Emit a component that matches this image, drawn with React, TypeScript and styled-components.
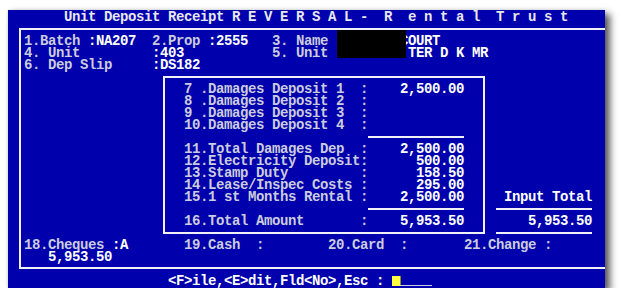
import styled, { createGlobalStyle } from 'styled-components';

const LABEL = '#ccccdf';
const BRIGHT = '#ffffff';
const LINE = '#f0f0f8';

const GlobalStyle = createGlobalStyle`
  html, body {
    margin: 0;
    padding: 0;
    background: #ffffff;
  }
`;

type Seg = [string, 'l' | 'v'];
type BoxItem = { label: string; amount?: string } | 'rule';

const header: Seg[][][] = [
  [
    [['1.Batch ', 'l'], [':NA207', 'v']],
    [['2.Prop ', 'l'], [':2555', 'v']],
    [['3. Name ', 'l'], [':       COURT', 'v']],
  ],
  [
    [['4. Unit', 'l']],
    [[':403', 'v']],
    [['5. Unit ', 'l'], [':        TER D K MR', 'v']],
  ],
  [[['6. Dep Slip', 'l']], [[':DS182', 'v']], []],
];

const boxItems: BoxItem[] = [
  { label: '7 .Damages Deposit 1', amount: '2,500.00' },
  { label: '8 .Damages Deposit 2' },
  { label: '9 .Damages Deposit 3' },
  { label: '10.Damages Deposit 4' },
  'rule',
  { label: '11.Total Damages Dep', amount: '2,500.00' },
  { label: '12.Electricity Deposit', amount: '500.00' },
  { label: '13.Stamp Duty', amount: '158.50' },
  { label: '14.Lease/Inspec Costs', amount: '295.00' },
  { label: '15.1 st Months Rental', amount: '2,500.00' },
  'rule',
  { label: '16.Total Amount', amount: '5,953.50' },
];

const renderSegs = (segs: Seg[]) =>
  segs.map(([text, kind], i) =>
    kind === 'l' ? <Lbl key={i}>{text}</Lbl> : <Val key={i}>{text}</Val>
  );

const App: React.FC = () => {
  return (
    <>
      <GlobalStyle />
      <Screen>
        <Title>Unit Deposit Receipt R E V E R S A L -  R  e n t a l  T r u s t</Title>
        <Frame>
          <HeaderGrid>
            {header.map((row, r) =>
              row.map((cell, c) => <Cell key={`${r}-${c}`}>{renderSegs(cell)}</Cell>)
            )}
          </HeaderGrid>
          <Redaction />
          <Middle>
            <Box>
              {boxItems.map((item, i) =>
                item === 'rule' ? (
                  <BoxRow key={i}>
                    <span />
                    <span />
                    <Rule />
                  </BoxRow>
                ) : (
                  <BoxRow key={i}>
                    <Lbl>{item.label}</Lbl>
                    <Lbl>:</Lbl>
                    <Amount>{item.amount ?? ''}</Amount>
                  </BoxRow>
                )
              )}
            </Box>
            <Side>
              <Amount as="div">Input Total</Amount>
              <Rule />
              <Amount as="div">5,953.50</Amount>
              <Rule />
            </Side>
          </Middle>
          <PayGrid>
            <Cell>
              <Lbl>18.Cheques </Lbl>
              <Val>:A</Val>
            </Cell>
            <Cell>
              <Lbl>19.Cash  :</Lbl>
            </Cell>
            <Cell>
              <Lbl>20.Card  :</Lbl>
            </Cell>
            <Cell>
              <Lbl>21.Change :</Lbl>
            </Cell>
          </PayGrid>
          <ChequeAmount>5,953.50</ChequeAmount>
        </Frame>
        <Prompt>
          <Val>{'<F>ile,<E>dit,Fld<No>,Esc : '}</Val>
          <Field>
            <Cursor />
            <Blank />
          </Field>
        </Prompt>
      </Screen>
    </>
  );
};

export default App;

const Screen = styled.div`
  margin: 10px 0 0 8px;
  width: 597px;
  padding: 1px 0 0;
  box-sizing: border-box;
  background: #0000ac;
  box-shadow: 5px 4px 7px rgba(0, 0, 0, 0.65), 0 0 3px rgba(0, 0, 0, 0.15);
  overflow: hidden;
  font-family: "Liberation Mono", "DejaVu Sans Mono", monospace;
  font-weight: 700;
  font-size: 14px;
  letter-spacing: -0.4px;
  line-height: 12px;
  white-space: pre;
  color: ${LABEL};
`;

const Title = styled.div`
  height: 12px;
  padding-left: 56px;
  color: #e8e8f2;
`;

const Frame = styled.div`
  position: relative;
  margin: 5px 0 0 11px;
  width: 614px;
  padding: 5px 0 4px 3px;
  border: 2px solid ${LINE};
`;

const HeaderGrid = styled.div`
  display: grid;
  grid-template-columns: 128px 120px 1fr;
  grid-auto-rows: 12px;
`;

const Cell = styled.div`
  height: 12px;
`;

const Lbl = styled.span`
  color: ${LABEL};
`;

const Val = styled.span`
  color: ${BRIGHT};
`;

const Redaction = styled.div`
  position: absolute;
  left: 316px;
  top: 0;
  width: 69px;
  height: 28px;
  background: #000000;
`;

const Middle = styled.div`
  display: flex;
  height: 168px;
  padding-left: 139px;
`;

const Box = styled.div`
  align-self: flex-start;
  margin-top: 5px;
  padding: 5px 19px;
  border: 2px solid ${LINE};
`;

const BoxRow = styled.div`
  display: grid;
  grid-template-columns: 176px 8px 96px;
  height: 12px;
`;

const Amount = styled.span`
  color: ${BRIGHT};
  text-align: right;
  height: 12px;
`;

const Rule = styled.div`
  box-sizing: border-box;
  height: 7px;
  margin-top: 5px;
  border-top: 2px solid ${LINE};
`;

const Side = styled.div`
  align-self: flex-end;
  display: grid;
  grid-auto-rows: 12px;
  margin-left: 11px;
  width: 96px;
`;

const PayGrid = styled.div`
  display: grid;
  grid-template-columns: 160px 144px 136px 1fr;
  height: 12px;
`;

const ChequeAmount = styled.div`
  height: 12px;
  padding-left: 24px;
  color: ${BRIGHT};
`;

const Prompt = styled.div`
  display: flex;
  height: 12px;
  margin: 6px 0 1px;
  padding-left: 160px;
`;

const Field = styled.span`
  display: flex;
  width: 40px;
  height: 11px;
`;

const Cursor = styled.span`
  width: 8px;
  height: 10px;
  margin-top: 1px;
  background: #ffff40;
  box-shadow: 1px 0 0 #8a8a40;
`;

const Blank = styled.span`
  flex: 1;
  border-bottom: 1px solid ${LABEL};
`;
